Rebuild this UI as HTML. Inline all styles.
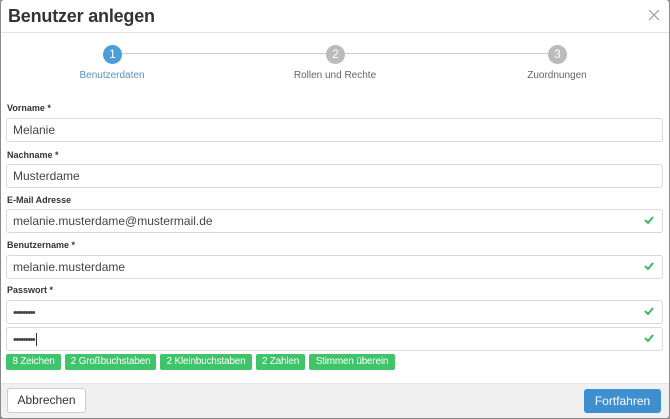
<!DOCTYPE html>
<html><head><meta charset="utf-8"><style>
*{box-sizing:border-box;margin:0;padding:0}
body{width:670px;height:419px;overflow:hidden;background:#8a8a8a;font-family:"Liberation Sans",sans-serif;position:relative}
.modal{position:absolute;left:1px;top:0;width:668px;height:418px;background:#fff;border-radius:3px;overflow:hidden}
.abs{position:absolute}
h1{position:absolute;left:7px;top:6px;font-size:18px;font-weight:bold;color:#333;letter-spacing:-0.2px}
.hdr{position:absolute;left:0;top:32px;width:668px;height:1px;background:#e2e2e2}
.line{position:absolute;top:53px;height:1px;background:#ccc}
.c{position:absolute;top:45px;width:19px;height:19px;border-radius:50%;color:#fff;font-size:12px;text-align:center;line-height:19px;background:#bbb}
.sl{position:absolute;top:70px;font-size:10px;color:#666;width:160px;text-align:center}
.lbl{position:absolute;left:6px;font-size:9px;font-weight:bold;color:#333}
.inp{position:absolute;left:5px;width:657px;height:24px;border:1px solid #d9d9d9;border-radius:3px;font-size:12px;color:#444;padding-left:6px;line-height:22px}
.ok{position:absolute;right:8px;top:6px;width:10px;height:8px}
.pw{font-size:11px;letter-spacing:-1.5px}
.b{position:absolute;top:354px;height:16px;background:#3fc46a;color:#fff;font-size:10px;line-height:16px;text-align:center;border-radius:2px;letter-spacing:-0.2px}
.foot{position:absolute;left:0;top:383px;width:668px;height:35px;background:#f0f0f0;border-top:1px solid #e6e6e6}
</style></head><body>
<div class="modal">
<h1>Benutzer anlegen</h1>
<svg class="abs" style="left:647px;top:9px" width="12" height="12"><path d="M1 1L11 11M11 1L1 11" stroke="#999" stroke-width="1.2"/></svg>
<div class="hdr"></div>
<div class="line" style="left:121px;width:205px"></div>
<div class="line" style="left:344px;width:204px"></div>
<div class="c" style="left:102px;background:#4b9fd8">1</div>
<div class="c" style="left:325px">2</div>
<div class="c" style="left:547px">3</div>
<div class="sl" style="left:31px;color:#5a8fc0">Benutzerdaten</div>
<div class="sl" style="left:254px">Rollen und Rechte</div>
<div class="sl" style="left:476px">Zuordnungen</div>

<div class="lbl" style="top:103px">Vorname *</div>
<div class="inp" style="top:118px">Melanie</div>
<div class="lbl" style="top:150px">Nachname *</div>
<div class="inp" style="top:164px">Musterdame</div>
<div class="lbl" style="top:195px">E-Mail Adresse</div>
<div class="inp" style="top:209px">melanie.musterdame@mustermail.de<svg class="ok" viewBox="0 0 10 8"><path d="M1 4L4 7L9 1" stroke="#3fb864" stroke-width="2" fill="none"/></svg></div>
<div class="lbl" style="top:240px">Benutzername *</div>
<div class="inp" style="top:255px">melanie.musterdame<svg class="ok" viewBox="0 0 10 8"><path d="M1 4L4 7L9 1" stroke="#3fb864" stroke-width="2" fill="none"/></svg></div>
<div class="lbl" style="top:285px">Passwort *</div>
<div class="inp" style="top:300px"><span class="pw">•••••••••</span><svg class="ok" viewBox="0 0 10 8"><path d="M1 4L4 7L9 1" stroke="#3fb864" stroke-width="2" fill="none"/></svg></div>
<div class="inp" style="top:327px"><span class="pw">•••••••••</span><span style="display:inline-block;width:1px;height:13px;background:#333;vertical-align:middle;margin-left:2px"></span><svg class="ok" viewBox="0 0 10 8"><path d="M1 4L4 7L9 1" stroke="#3fb864" stroke-width="2" fill="none"/></svg></div>

<div class="b" style="left:5px;width:55px">8 Zeichen</div>
<div class="b" style="left:64px;width:91px">2 Großbuchstaben</div>
<div class="b" style="left:159px;width:92px">2 Kleinbuchstaben</div>
<div class="b" style="left:255px;width:49px">2 Zahlen</div>
<div class="b" style="left:308px;width:86px">Stimmen überein</div>

<div class="foot"></div>
<div class="abs" style="left:6px;top:388px;width:79px;height:25px;background:#fff;border:1px solid #ccc;border-radius:3px;font-size:12px;color:#333;text-align:center;line-height:23px">Abbrechen</div>
<div class="abs" style="left:583px;top:389px;width:77px;height:24px;background:#3d8fcf;border-radius:3px;font-size:12px;color:#fff;text-align:center;line-height:24px">Fortfahren</div>
</div>
</body></html>
